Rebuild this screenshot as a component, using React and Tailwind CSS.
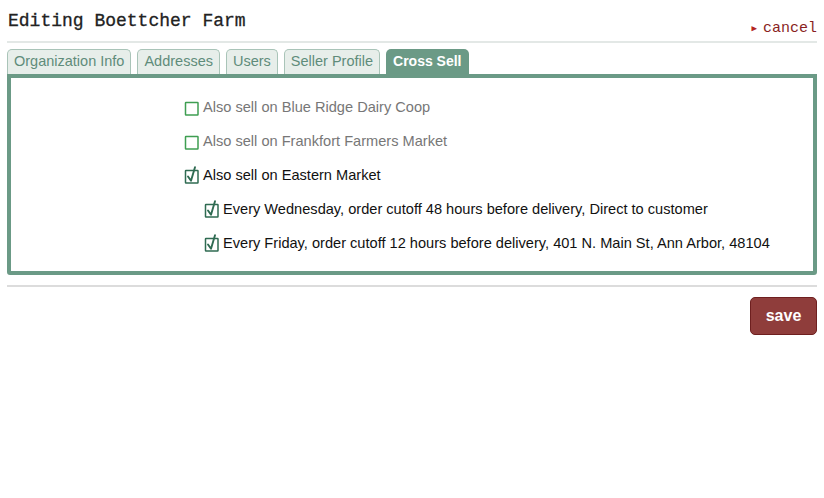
import { useState } from "react";

const tabs = ["Organization Info", "Addresses", "Users", "Seller Profile", "Cross Sell"];

function Box({ checked, muted }) {
  const stroke = muted ? "#3f9e52" : "#2f6b52";
  return (
    <svg width="16" height="18" viewBox="0 0 16 18" className="shrink-0 -mt-[2px]">
      <rect x="1.5" y="4.5" width="12.5" height="12.5" fill="none" stroke={stroke} strokeWidth="1.5" rx="0.5" />
      {checked && (
        <path d="M4 10.5 L7 14.8 L11 1.2" fill="none" stroke={stroke} strokeWidth="1.9" strokeLinecap="round" strokeLinejoin="round" />
      )}
    </svg>
  );
}

function Row({ checked, muted, indent, children }) {
  return (
    <div className={`flex items-center gap-[3px] h-[34px] ${indent ? "pl-[20px]" : ""}`}>
      <Box checked={checked} muted={muted} />
      <span className={muted ? "text-[#777]" : "text-[#111]"}>{children}</span>
    </div>
  );
}

export default function App() {
  const [active] = useState("Cross Sell");

  return (
    <div className="w-[824px] h-[498px] bg-white px-[7px] font-['Liberation_Sans',Arial,sans-serif]">
      {/* Header */}
      <div className="flex items-end justify-between h-[43px] pb-[11px] border-b-2 border-[#e3e8e6]">
        <h1 className="font-['Liberation_Mono',monospace] text-[18px] leading-none text-[#222] pl-px [-webkit-text-stroke:0.3px_#222]">Editing Boettcher Farm</h1>
        <a className="font-['Liberation_Mono',monospace] text-[15px] leading-none text-[#8a1f1f] -mb-[6px]">
          <span className="text-[9px] text-[#b3261e] mr-[6px] relative -top-px">▶</span>cancel
        </a>
      </div>

      {/* Tabs */}
      <div className="flex gap-[6px] mt-[6px] h-[25px] items-end">
        {tabs.map((t) =>
          t === active ? (
            <div key={t} className="h-[25px] px-[7px] flex items-center rounded-t-[5px] bg-[#6b9a86] text-white font-bold text-[14px]">
              {t}
            </div>
          ) : (
            <div key={t} className="h-[25px] px-[6px] flex items-center rounded-t-[5px] bg-[#e7eeea] border border-b-0 border-[#a9c4b8] text-[#5f8c7a] text-[14.5px]">
              {t}
            </div>
          )
        )}
      </div>

      {/* Panel */}
      <div className="border-4 border-[#6b9a86] rounded-b-[3px] pl-[173px] pt-[13px] pb-[10px] text-[14.6px]">
        <Row muted>Also sell on Blue Ridge Dairy Coop</Row>
        <Row muted>Also sell on Frankfort Farmers Market</Row>
        <Row checked>Also sell on Eastern Market</Row>
        <Row checked indent>Every Wednesday, order cutoff 48 hours before delivery, Direct to customer</Row>
        <Row checked indent>Every Friday, order cutoff 12 hours before delivery, 401 N. Main St, Ann Arbor, 48104</Row>
      </div>

      <div className="mt-[10px] border-t-2 border-[#dcdcdc]" />

      <div className="flex justify-end mt-[10px]">
        <button className="w-[67px] h-[38px] rounded-[5px] bg-[#8f3d3b] border border-[#6e1f1f] text-white font-bold text-[16px]">
          save
        </button>
      </div>
    </div>
  );
}
